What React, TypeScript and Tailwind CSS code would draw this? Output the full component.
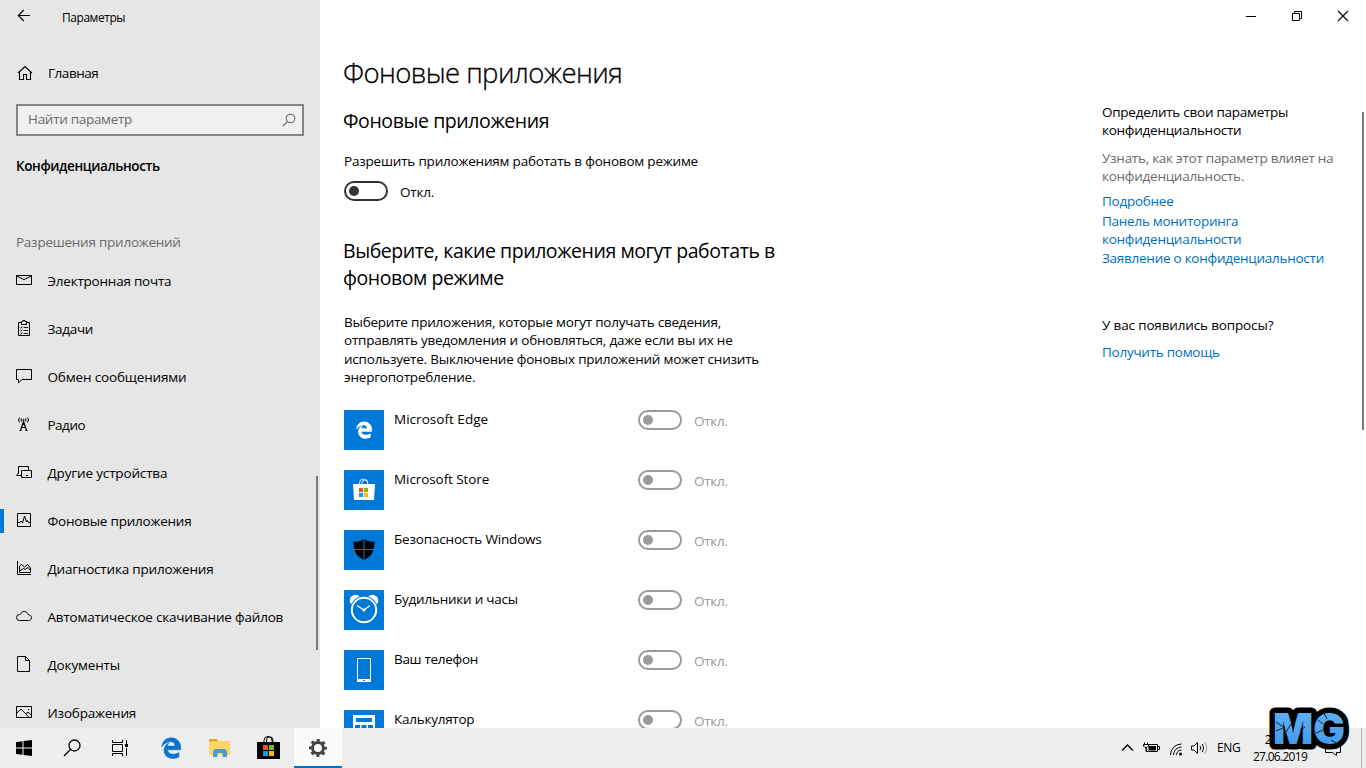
import type { ReactNode } from 'react';

interface NavItem {
  label: string;
  icon: ReactNode;
  active?: boolean;
  className: string;
}

interface AppItem {
  name: string;
  tile: ReactNode;
  className: string;
}

const EDGE_PATH =
  'M25.714 228.163c.111-.162.23-.323.342-.485-.021.162-.045.323-.065.485h-.277zm460.572 15.508c0-44.032-7.754-84.465-28.801-122.405C416.498 47.879 343.912 8.001 258.893 8.001 118.962 7.724 40.617 113.214 26.056 227.679c42.429-61.312 117.073-121.376 220.375-124.966 0 0 109.666 0 99.419 104.957H169.997c6.369-37.386 18.554-58.986 34.339-78.926-75.048 34.893-121.85 96.096-120.742 188.315.83 71.448 50.124 144.836 120.743 171.976 83.357 31.847 192.776 7.2 240.132-21.324V363.307c-80.864 56.494-270.871 60.925-272.255-67.572h314.073v-52.064z';

const navItems: NavItem[] = [
  {
    label: 'Электронная почта',
    className: 'tracking-[-0.22px]',
    icon: <path d="M.5 3.5h15v9H.5zM.5 4l7.5 3.6L15.5 4" />,
  },
  {
    label: 'Задачи',
    className: 'tracking-[-0.3px]',
    icon: (
      <>
        <path d="M5 2.5H2.5v13h11v-13H11M5.5 4.5v-3H7v-1h2v1h1.500v3z" />
        <path d="M7.5 7.500H12M7.500 10.500H12M7.500 13.500H12M4 7.500l.8.800L6.200 6.600M4 10.500l.8.800L6.200 9.600M4 13.500l.8.800L6.200 12.600" strokeWidth=".9" />
      </>
    ),
  },
  {
    label: 'Обмен сообщениями',
    className: 'tracking-[-0.15px]',
    icon: <path d="M.5 1.500h15v10H6L2.500 14.800V11.500h-2z" />,
  },
  {
    label: 'Радио',
    className: 'tracking-[-0.5px]',
    icon: (
      <>
        <path d="M7.500 5.500L4.500 14.500M7.500 5.500l3 9M5.500 11.500h4M6.200 8.500h2.600M3.500 14.500h2M9.500 14.500h2" strokeWidth="1.200" />
        <path d="M3.500 1.500q-2 2.500 0 5M5.500 2.500q-1.200 1.500 0 3M9.500 2.500q1.200 1.500 0 3M11.500 1.500q2 2.500 0 5" />
        <circle cx="7.500" cy="4" r=".7" />
      </>
    ),
  },
  {
    label: 'Другие устройства',
    className: 'tracking-[-0.15px]',
    icon: (
      <>
        <path d="M5.500 13.500h10v-7h-10zM2.500 9.500v-7h10v4M2.500 9l-2 2.500h5" />
        <path d="M10 11.500h2" />
      </>
    ),
  },
  {
    label: 'Фоновые приложения',
    className: 'tracking-[-0.22px]',
    active: true,
    icon: <path d="M1.500 1.500h13v13h-13zM2 10.500h1.800L5 9l1.500 2L8.500 4l2.200 6 .8-1.500L12.500 10.500H14" />,
  },
  {
    label: 'Диагностика приложения',
    className: 'tracking-[-0.2px]',
    icon: <path d="M1.500 1v13.500H15M3.500 12.500V6l2-1.500 3 2.500 3-2.500 3 3.500v4.500zM3.500 11l4-2.500 1.500 1L12 7.500l2.500 3" />,
  },
  {
    label: 'Автоматическое скачивание файлов',
    className: 'tracking-[-0.2px]',
    icon: <path d="M3.500 12.500a3 3 0 0 1 0-6h.7C5 4.500 6.500 3.500 8.200 3.500c2 0 3.500 1.200 4 3.200 2 0 3.300 1.200 3.300 3s-1.300 2.800-3 2.800z" />,
  },
  {
    label: 'Документы',
    className: 'tracking-[-0.15px]',
    icon: <path d="M1.500.5h8l4 4v11h-12zM9.500.5v4h4" />,
  },
  {
    label: 'Изображения',
    className: 'tracking-[-0.2px]',
    icon: (
      <>
        <path d="M.5 2.500h15v11H.5zM.8 9L5 5l8 8.300M10 10l2-2 3.300 3.500" />
        <path d="M12 5.500h1" />
      </>
    ),
  },
];

const appItems: AppItem[] = [
  {
    name: 'Microsoft Edge',
    className: 'tracking-[0.03px]',
    tile: (
      <g transform="translate(11.500 11.500) scale(.0335)">
        <path d={EDGE_PATH} fill="#fff" stroke="#fff" strokeWidth="14" />
      </g>
    ),
  },
  {
    name: 'Microsoft Store',
    className: 'tracking-[-0.08px]',
    tile: (
      <>
        <path d="M9 14h22l-1 16H10z" fill="#fff" />
        <path d="M15.500 15v-2a4 4 0 0 1 8 0v2M18 15v-2a3 3 0 0 1 6 0" fill="none" stroke="#d9ecff" />
        <path d="M15 18h4v4h-4z" fill="#f25022" />
        <path d="M20 18h4v4h-4z" fill="#7fba00" />
        <path d="M15 23h4v4h-4z" fill="#00a4ef" />
        <path d="M20 23h4v4h-4z" fill="#ffb900" />
      </>
    ),
  },
  {
    name: 'Безопасность Windows',
    className: 'tracking-[-0.18px]',
    tile: (
      <>
        <path d="M20 9c3 2.200 6.500 2.800 10.500 2.800 0 9-2.500 14.500-10.500 18.200C12 26.300 9.500 20.800 9.500 11.800 13.500 11.800 17 11.200 20 9z" fill="#000" />
        <path d="M20 9v21M9 19.500h22" stroke="#0078d7" />
      </>
    ),
  },
  {
    name: 'Будильники и часы',
    className: 'tracking-[-0.23px]',
    tile: (
      <>
        <circle cx="11.500" cy="10.500" r="5.800" fill="#fff" />
        <circle cx="28.500" cy="10.500" r="5.800" fill="#fff" />
        <circle cx="20" cy="20" r="14" fill="#0078d7" />
        <circle cx="20" cy="20" r="12.200" fill="none" stroke="#fff" strokeWidth="2" />
        <path d="M13 15.500l6.800 4.500 6-4.200" fill="none" stroke="#fff" strokeWidth="1.300" />
        <circle cx="20" cy="20" r="1.600" fill="#fff" />
      </>
    ),
  },
  {
    name: 'Ваш телефон',
    className: 'tracking-[-0.3px]',
    tile: (
      <>
        <path d="M13.500 8.500h13v23h-13z" fill="none" stroke="#fff" />
        <path d="M13 29h14v3H13z" fill="#fff" />
        <path d="M19 30h2v1h-2z" fill="#0078d7" />
      </>
    ),
  },
  {
    name: 'Калькулятор',
    className: 'tracking-[-0.25px]',
    tile: (
      <>
        <path d="M9 5h22v30H9z" fill="#fff" />
        <path d="M12 8h16v4H12zM11 15h5v3h-5zM17.500 15h5v3h-5zM24 15h5v3h-5z" fill="#0078d7" />
      </>
    ),
  },
];

function Toggle({ disabled = false }: { disabled?: boolean }) {
  return (
    <div
      className={
        disabled
          ? 'flex h-5 w-11 shrink-0 items-center rounded-full border-2 border-[#999999] pl-[3px]'
          : 'flex h-5 w-11 shrink-0 items-center rounded-full border-2 border-[#333333] pl-[3px]'
      }
    >
      <div className={disabled ? 'size-2.5 rounded-full bg-[#999999]' : 'size-2.5 rounded-full bg-[#333333]'} />
    </div>
  );
}

function Sidebar() {
  return (
    <aside className="relative flex w-80 shrink-0 flex-col bg-[#e6e6e6]">
      <div className="flex h-8 items-center">
        <svg className="ml-4 size-4" viewBox="0 0 16 16" fill="none" stroke="#000" strokeWidth="1.100">
          <path d="M2.500 7.500H14M7.800 2L2.300 7.500l5.500 5.500" />
        </svg>
        <span className="ml-[30px] pt-[3px] text-xs leading-4 tracking-[-0.45px]">Параметры</span>
      </div>

      <div className="mt-[25px] flex h-8 items-center">
        <svg className="ml-[17px] size-4" viewBox="0 0 16 16" fill="none" stroke="#000" strokeWidth="1.100">
          <path d="M1 8l7-6.500L15 8M2.500 7v7.500h4v-5h3v5h4V7" />
        </svg>
        <span className="ml-[15px] tracking-[-0.45px]">Главная</span>
      </div>

      <div className="mx-4 mt-[15px] flex h-8 shrink-0 items-center border-2 border-[#858585] bg-[#f0f0f0] pr-[5px] pl-2.5">
        <span className="flex-1 pb-px tracking-[-0.3px] text-[#6b6b6b]">Найти параметр</span>
        <svg className="size-4" viewBox="0 0 16 16" fill="none" stroke="#666" strokeWidth="1.100">
          <circle cx="9.500" cy="6.500" r="4.300" />
          <path d="M6.300 9.800L2 14" />
        </svg>
      </div>

      <h3 className="mt-5 ml-4 leading-5 font-semibold tracking-[-0.4px]">Конфиденциальность</h3>
      <p className="mt-14 mb-[5px] ml-4 leading-5 tracking-[-0.25px] text-[#6b6b6b]">Разрешения приложений</p>

      <nav className="min-h-0 flex-1 overflow-hidden">
        {navItems.map((item) => (
          <div key={item.label} className="flex h-12 items-center">
            <div className={item.active ? 'h-6 w-1 bg-[#0078d7]' : 'h-6 w-1'} />
            <svg
              className="mb-0.5 ml-3 size-4 shrink-0"
              viewBox="0 0 16 16"
              fill="none"
              stroke="#000"
            >
              {item.icon}
            </svg>
            <span className={`ml-[15.500px] whitespace-nowrap ${item.className}`}>{item.label}</span>
          </div>
        ))}
      </nav>
      <div className="absolute top-[476px] left-[316px] h-[174px] w-0.5 bg-[#7a7a7a]" />
    </aside>
  );
}

function WindowControls() {
  return (
    <svg className="h-8 w-[138px]" viewBox="0 0 138 32" fill="none" stroke="#000">
      <path d="M18 16.500h10" />
      <path d="M64.500 13.500h7v7h-7zM66.500 13.500v-2h7v7h-2" />
      <path d="M110 11l10 10M120 11l-10 10" strokeWidth="1.100" />
    </svg>
  );
}

function HelpColumn() {
  return (
    <div className="mt-[71px] ml-auto w-[264px] shrink-0 leading-[18px] tracking-[-0.26px] whitespace-nowrap">
      <p>
        Определить свои параметры
        <br />
        конфиденциальности
      </p>
      <p className="mt-2.5 text-[#6b6b6b]">
        Узнать, как этот параметр влияет на
        <br />
        конфиденциальность.
      </p>
      <div className="mt-[7px] text-[#006fbf]">
        <p>Подробнее</p>
        <p className="mt-0.5">
          Панель мониторинга
          <br />
          конфиденциальности
        </p>
        <p className="mt-px">Заявление о конфиденциальности</p>
      </div>
      <p className="mt-[49px] tracking-[-0.15px]">У вас появились вопросы?</p>
      <p className="mt-[9px] text-[#006fbf]">Получить помощь</p>
    </div>
  );
}

function Content() {
  return (
    <main className="relative flex min-w-0 flex-1 flex-col overflow-hidden bg-white">
      <div className="flex h-8 shrink-0 justify-end">
        <WindowControls />
      </div>
      <div className="flex min-h-0 flex-1 pl-6">
        <div className="w-[450px] whitespace-nowrap">
          <h1 className="mt-[23px] -ml-px text-[27.500px] leading-9 font-light tracking-[-0.57px] [-webkit-text-stroke:0.3px_#000]">
            Фоновые приложения
          </h1>
          <h2 className="mt-4 -ml-px text-[19.500px] leading-7 tracking-[-0.42px]">Фоновые приложения</h2>
          <p className="mt-4 leading-5 tracking-[-0.2px]">Разрешить приложениям работать в фоновом режиме</p>
          <div className="mt-[10px] flex h-5">
            <Toggle />
            <span className="ml-3 leading-[22px] tracking-[-0.2px]">Откл.</span>
          </div>
          <h2 className="mt-9 -ml-px text-[19.500px] leading-[27px] tracking-[-0.44px]">
            Выберите, какие приложения могут работать в
            <br />
            фоновом режиме
          </h2>
          <p className="mt-[22px] leading-[18.300px] tracking-[-0.22px]">
            Выберите приложения, которые могут получать сведения,
            <br />
            отправлять уведомления и обновляться, даже если вы их не
            <br />
            используете. Выключение фоновых приложений может снизить
            <br />
            энергопотребление.
          </p>
          <ul className="mt-[23.800px]">
            {appItems.map((app) => (
              <li key={app.name} className="flex h-[60px]">
                <svg className="size-10 shrink-0 bg-[#0078d7]" viewBox="0 0 40 40">
                  {app.tile}
                </svg>
                <span className={`ml-2.5 w-[244px] leading-[18px] ${app.className}`}>{app.name}</span>
                <Toggle disabled />
                <span className="ml-3 leading-[22px] tracking-[-0.25px] text-[#999999]">Откл.</span>
              </li>
            ))}
          </ul>
        </div>
        <HelpColumn />
      </div>
      <div className="absolute top-28 right-0.5 h-[318px] w-0.5 bg-[#7a7a7a]" />
    </main>
  );
}

function Watermark() {
  return (
    <svg className="absolute right-3.5 bottom-3 h-[56px] w-[88px] overflow-visible" viewBox="0 0 88 56">
      <defs>
        <linearGradient id="mg" x1="0" y1="0" x2="0" y2="1">
          <stop offset="0" stopColor="#62b6f7" />
          <stop offset="1" stopColor="#3f93e6" />
        </linearGradient>
      </defs>
      <text
        x="9"
        y="44"
        textLength="72"
        lengthAdjust="spacingAndGlyphs"
        fontFamily="Inter"
        fontWeight="900"
        fontSize="42"
        fill="url(#mg)"
        stroke="#000"
        strokeWidth="11"
        strokeLinejoin="round"
        paintOrder="stroke"
      >
        MG
      </text>
      {/* scratches over the letters */}
      <path d="M12 22l9 6M12 31l7-3M27 24l-5 8M36 30l5-3M52 33l7-3M60 13l3 6M67 40l5 3M54 20l5 4" stroke="#111" strokeWidth=".9" />
    </svg>
  );
}

function Taskbar() {
  return (
    <footer className="relative flex h-10 shrink-0 bg-[#eeeeee]">
      <div className="flex">
        <svg className="h-10 w-12" viewBox="0 0 48 40">
          <path d="M16 14.200l6.500-.9v6.200H16zM23.500 13.100L32 12v7.500h-8.500zM16 20.500h6.500v6.300l-6.500-.9zM23.500 20.500H32V28l-8.500-1.100z" />
        </svg>
        <svg className="h-10 w-12" viewBox="0 0 48 40" fill="none" stroke="#000" strokeWidth="1.300">
          <circle cx="26.500" cy="17.500" r="5.500" />
          <path d="M22.500 21.500L16 28" />
        </svg>
        <svg className="h-10 w-12" viewBox="0 0 48 40" fill="none" stroke="#000">
          <path d="M16.500 12v2.500h10V12M16.500 28v-2.500h10V28M16.500 16.500h10v7h-10zM30.500 12v4M30.500 20v8" />
          <path d="M29 16h3v3h-3z" fill="#000" stroke="none" />
        </svg>
        <svg className="ml-1.5 h-10 w-12" viewBox="0 0 48 40">
          <g transform="translate(10.500 9.500) scale(.0415)">
            <path d={EDGE_PATH} fill="#0b74d1" stroke="#0b74d1" strokeWidth="14" />
          </g>
        </svg>
        <svg className="h-10 w-12" viewBox="0 0 48 40">
          <path d="M11 11h8l1.500 2H32v14H11z" fill="#fbd667" />
          <path d="M11 11h8l1 2.500h-9z" fill="#dda52b" />
          <path d="M15 29v-6l2-2h10l2 2v6h-4.500v-4h-5v4z" fill="#4a9ad4" />
        </svg>
        <svg className="h-10 w-12" viewBox="0 0 48 40">
          <path d="M11 14h23v17H11z" />
          <path d="M18 14.500v-2a4 4 0 0 1 8 0v2M20.500 14.500V12a3.200 3.200 0 0 1 6.400 0v2.500" fill="none" stroke="#000" />
          <path d="M17 17h5v5h-5z" fill="#f25022" />
          <path d="M23 17h5v5h-5z" fill="#7fba00" />
          <path d="M17 23h5v5h-5z" fill="#00a4ef" />
          <path d="M23 23h5v5h-5z" fill="#ffb900" />
        </svg>
        <div className="h-10 w-12 border-b-2 border-[#0071c7] bg-[#fbfbfb]">
          <svg className="h-10 w-12" viewBox="0 0 48 40" fill="none" stroke="#444">
            <circle cx="24" cy="20" r="5.500" strokeWidth="3" />
            <circle cx="24" cy="20" r="7.600" strokeWidth="2.800" strokeDasharray="3 2.969" strokeDashoffset="1.500" />
          </svg>
        </div>
      </div>

      <div className="ml-auto flex text-xs">
        <svg className="h-10 w-[97px]" viewBox="0 0 97 40" fill="none" stroke="#000">
          {/* chevron */}
          <path d="M2 22.500l5.500-5.500 5.500 5.500" strokeWidth="1.300" />
          {/* battery */}
          <path d="M27.500 16.500h10v7h-11v-3M38 18.500h1.500v3H38" />
          <path d="M28.500 18h7.500v4.500h-7.500z" fill="#000" stroke="none" />
          <path d="M24.500 14.500v2M27.500 14.500v2M23.500 16.500h5V18l-1.500 1.500h-2L23.500 18zM26 19.500v4" />
          {/* wifi */}
          <path d="M50.500 27A11 11 0 0 1 61.500 16M53.500 27a8 8 0 0 1 8-8M56.500 27a5 5 0 0 1 5-5" />
          <circle cx="60.500" cy="26" r="1.500" fill="#000" stroke="none" />
          {/* volume */}
          <path d="M71.500 18h2.500l3.500-3.500v11L74 22h-2.500zM80 18q1.500 2 0 4.200M82.200 16q3 4 0 8.200" />
          <path d="M84.500 14q4.500 6 0 12" stroke="#999" />
        </svg>
        <span className="w-9 text-xs leading-10 tracking-[-0.3px]">ENG</span>
        <div className="flex w-[54px] flex-col items-center pt-[3px] leading-[17px] whitespace-nowrap">
          <span>21:27</span>
          <span className="tracking-[-0.700px]">27.06.2019</span>
        </div>
        <svg className="h-10 w-[54px]" viewBox="0 0 54 40" fill="none" stroke="#000">
          <path d="M18.500 13.500h15v11h-4v3l-4-3h-7z" />
        </svg>
        <div className="w-[5px] border-l border-[#b8b8b8]" />
      </div>
      <Watermark />
    </footer>
  );
}

export default function App() {
  return (
    <div className="flex h-[768px] w-[1366px] flex-col overflow-hidden bg-white font-['Open_Sans','Noto_Sans',sans-serif] text-[13.500px] text-black">
      <div className="flex min-h-0 flex-1">
        <Sidebar />
        <Content />
      </div>
      <Taskbar />
    </div>
  );
}
